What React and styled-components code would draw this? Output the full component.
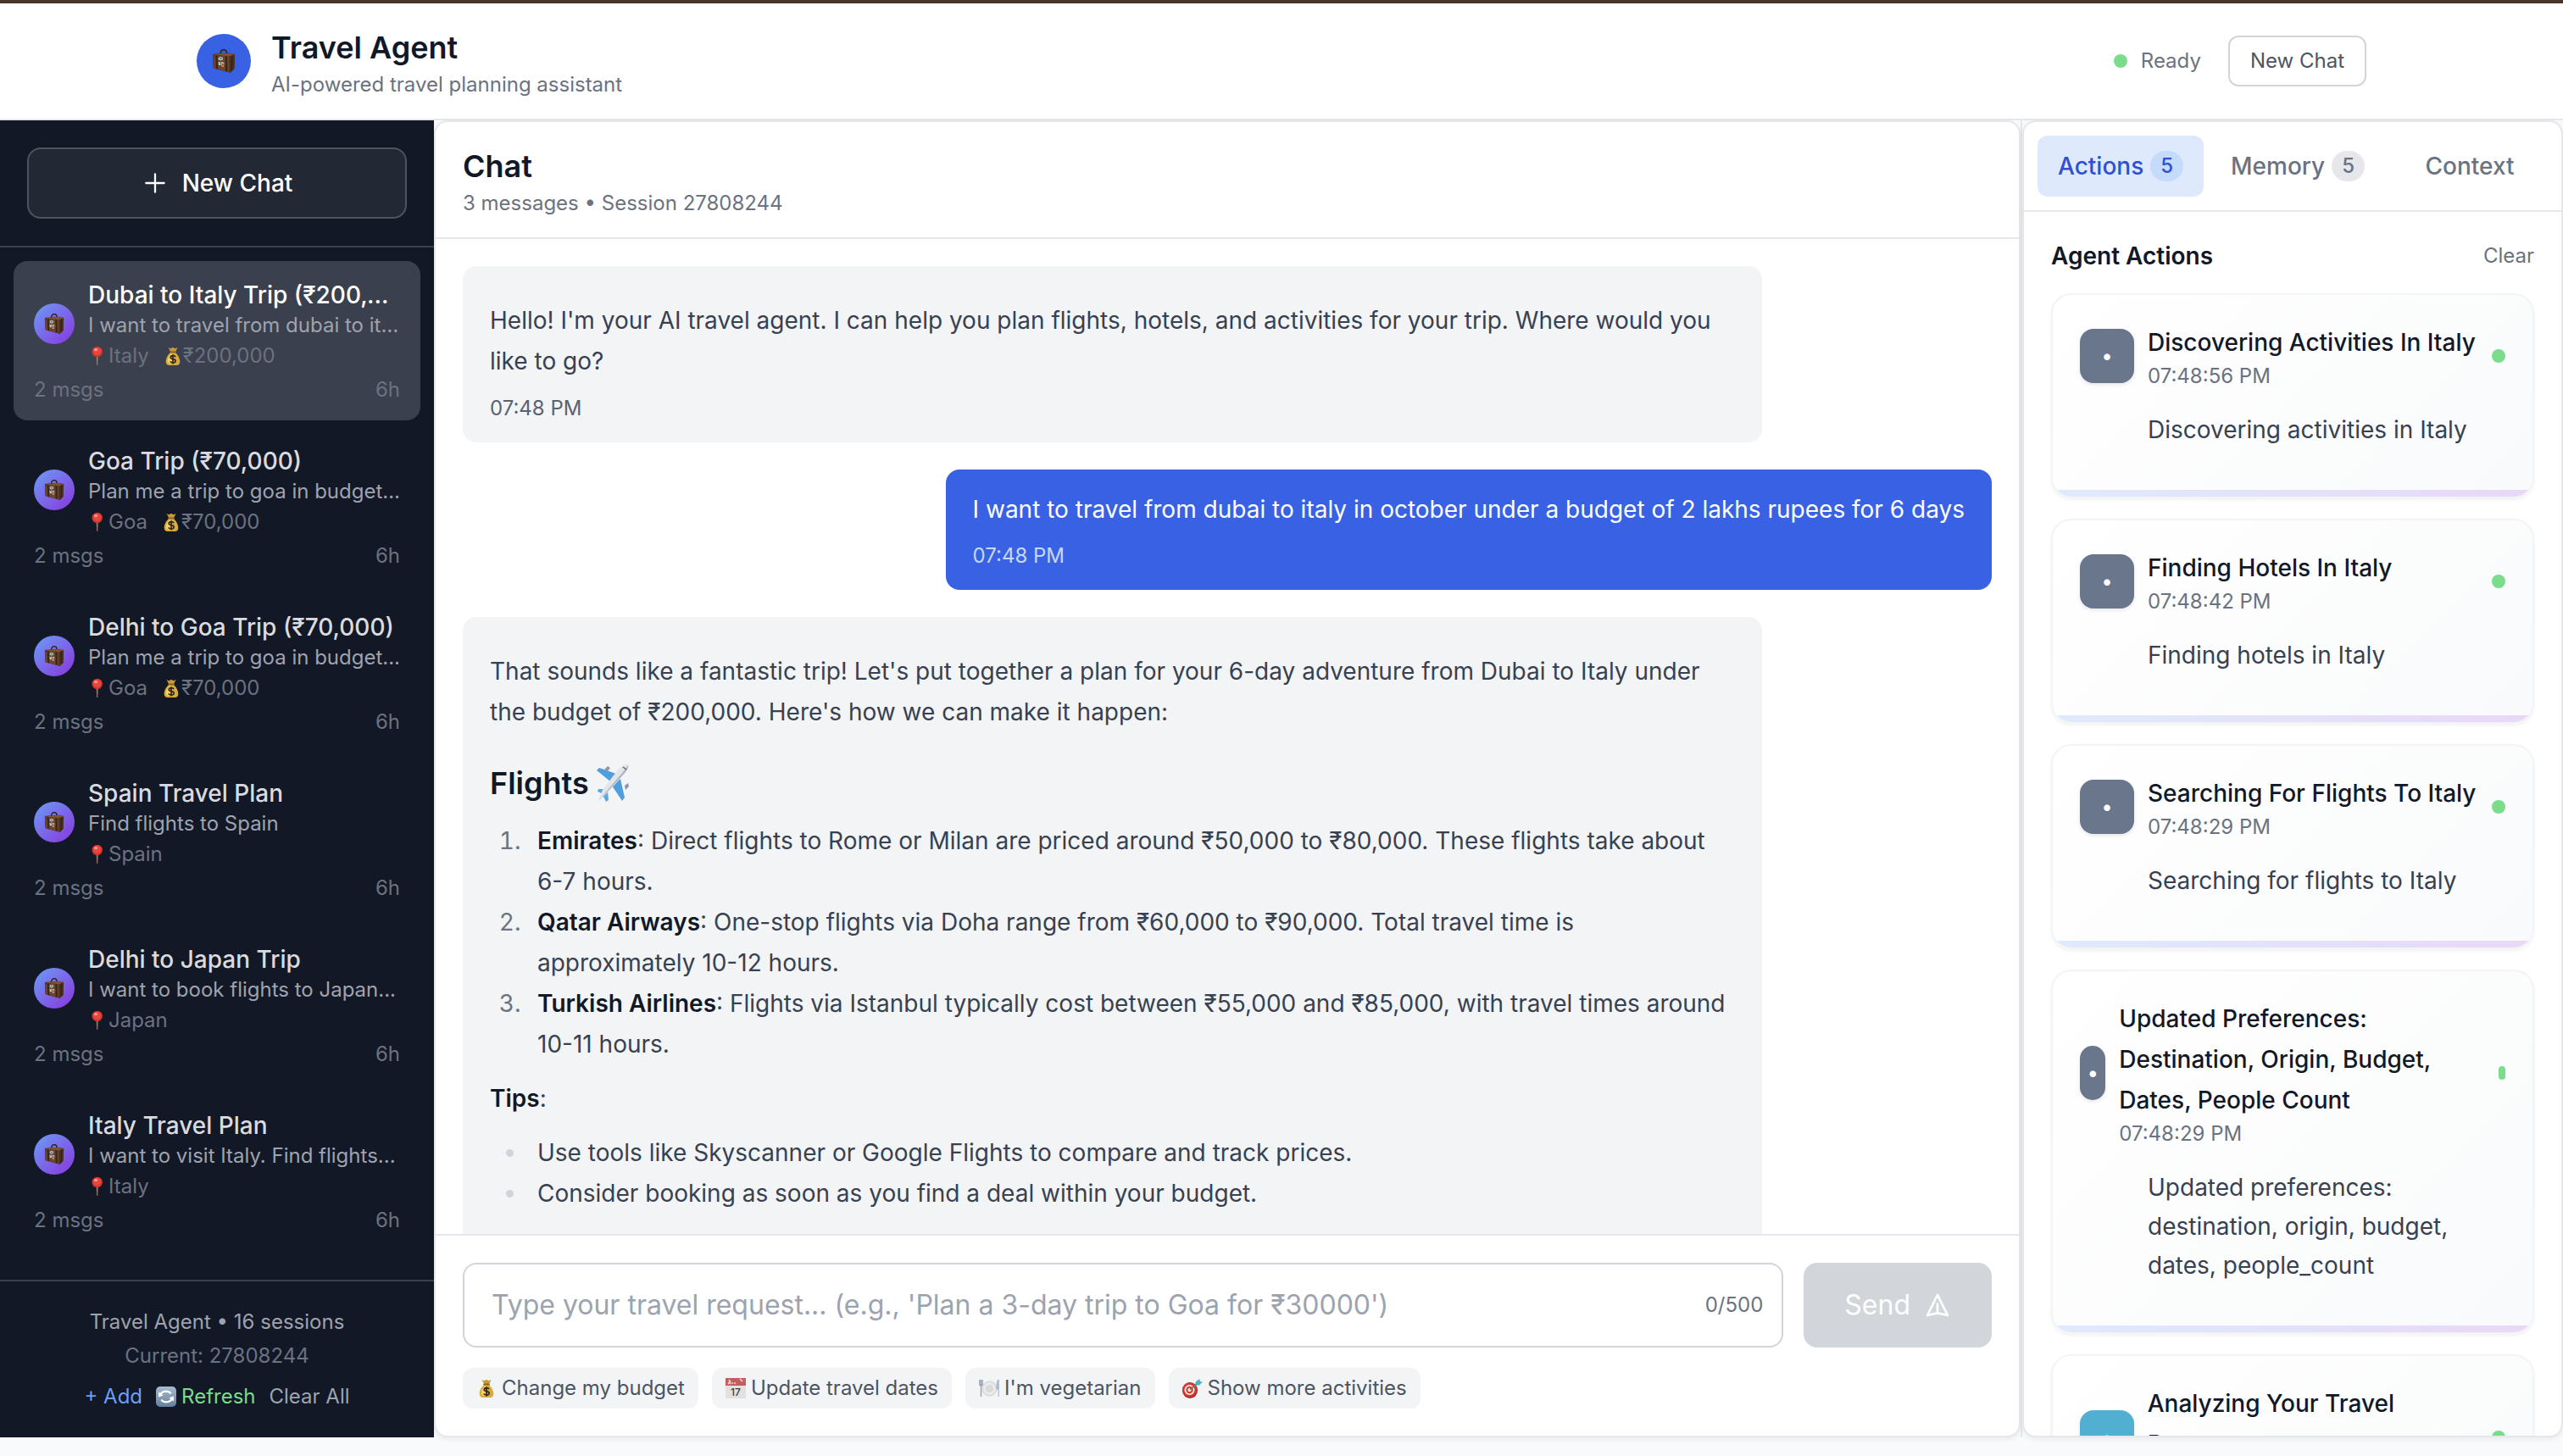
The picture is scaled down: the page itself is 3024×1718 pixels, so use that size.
import React, { useId, useState } from "react";
import styled, { createGlobalStyle } from "styled-components";

const c = {
  ink: "#111827",
  body: "#374151",
  slate: "#4b5563",
  muted: "#6b7280",
  faint: "#9ca3af",
  line: "#e5e7eb",
  edge: "#d1d5db",
  fill: "#f3f4f6",
  page: "#f9fafb",
  navy: "#121826",
  blue: "#3862e3",
  green: "#7bdc8b",
};

const GlobalStyle = createGlobalStyle`
  *, *::before, *::after { box-sizing: border-box; }
  body {
    margin: 0;
    background: ${c.page};
    color: ${c.ink};
    font-family: Inter, "Liberation Sans", sans-serif;
    font-size: 28px;
    line-height: 40px;
  }
  h1, h2, h3, p { margin: 0; font-size: inherit; font-weight: inherit; }
  button, input { font: inherit; color: inherit; }
  button { border: 0; padding: 0; background: none; cursor: pointer; }
  svg { display: block; flex: none; }
`;

/* ---------- pictograms ---------- */

function Suitcase({ size }) {
  return (
    <svg width={size} height={size} viewBox="0 0 84 84" aria-hidden="true">
      <path d="M30 20 Q30 3 41 2 Q53 2 53 17" fill="none" stroke="#2d2422" strokeWidth="5" />
      <path d="M3 21 Q3 17 8 17 L56 13 L78 17 Q81 18 81 22 L79 70 L66 83 Q63 84 60 82 L8 68 Q5 67 5 63 Z" fill="#4a2f22" />
      <path d="M4 22 L62 25 L62 82 L8 68 Q5 67 5 63 Z" fill="#6a442c" />
      <path d="M62 25 L81 20 L79 70 L65 83 L62 82 Z" fill="#49301f" />
      <path d="M5 20 L32 16 L58 14 L80 19 L62 25 Z" fill="#7d5638" />
      <path d="M13 22 L20 23 L21 71 L15 69 Z" fill="#3a251b" />
      <path d="M47 24 L54 25 L55 80 L48 78 Z" fill="#3a251b" />
      <path d="M70 23 L73 22 L72 75 L69 77 Z" fill="#2d1d14" />
      <ellipse cx="31" cy="34" rx="8" ry="6" fill="#cfd8d0" />
      <ellipse cx="31" cy="34" rx="5" ry="3" fill="#3f8390" />
      <path d="M22 46 L31 44 L32 56 L24 57 Z" fill="#8fb8a0" />
      <path d="M34 45 L43 47 L42 62 L34 61 Z" fill="#cfcbc6" />
      <path d="M36 50 L42 51 L41 60 L36 59 Z" fill="#b8473c" />
      <path d="M24 52 L28 51 L29 55 L25 56 Z" fill="#e1e1dc" />
    </svg>
  );
}

function Pin() {
  return (
    <svg width="24" height="24" viewBox="0 0 24 24" aria-hidden="true">
      <path d="M9.600 11 H11.800 L11.200 23 H10.200 Z" fill="#9b7b6c" />
      <circle cx="10.700" cy="7" r="6.200" fill="#d8322c" />
      <circle cx="10.700" cy="6.600" r="4.600" fill="#e8473d" />
      <ellipse cx="9" cy="4.600" rx="2.200" ry="1.700" fill="#f5988f" />
    </svg>
  );
}

function MoneyBag() {
  return (
    <svg width="24" height="24" viewBox="0 0 24 24" aria-hidden="true">
      <path d="M6.500 2 L9.200 3.200 L12 1.800 L14.600 3.200 L17.600 2 L15 7.200 H9.300 Z" fill="#c79a35" />
      <path d="M9 8 Q3.800 13 3.700 18.500 Q3.800 23 8 23 H16.200 Q20.300 23 20.300 18.500 Q20 13 15 8 Z" fill="#d9ab3d" />
      <path d="M9.600 9.500 Q6 13.500 5.800 18 Q6 20.500 8.400 21 H13 Q8 17 12 9.500 Z" fill="#f3d36b" />
      <rect x="8.200" y="6.400" width="7.800" height="2.200" rx="1.100" fill="#8d6520" />
      <path d="M15.200 13 Q14.200 11.600 12 11.600 Q9.200 11.800 9.200 13.700 Q9.300 15.200 12 15.600 Q15.200 16 15.200 18 Q15 20 12 20.100 Q9.600 20 8.800 18.400 M12 10.200 V21.500" fill="none" stroke="#33291a" strokeWidth="1.700" />
    </svg>
  );
}

function Plane() {
  return (
    <svg width="40" height="48" viewBox="0 0 40 48" aria-hidden="true">
      <path d="M24 13 L4 6 L1 9 L17 22 Z" fill="#4f9fdd" />
      <path d="M29 19 L34 41 L31 45 L19 27 Z" fill="#4f9fdd" />
      <path d="M12 31 L3 31 L2 34 L9 37 Z" fill="#5aa7e0" />
      <path d="M14 34 L15 44 L12 46 L8 38 Z" fill="#5aa7e0" />
      <path d="M10 8 l4 -4 3 2 -3 4 Z M34 27 l4 -3 1 4 -4 4 Z" fill="#8d96a3" />
      <path d="M38 2 Q40 5 35 12 L13 36 L2 46 L8 32 L27 7 Q34 1 38 2 Z" fill="#e3e5ea" />
      <path d="M38 3 Q39 6 34 12 L13 35 L4 44 L32 11 Z" fill="#aeb3bd" />
      <path d="M32 5 L36 8" stroke="#5b6470" strokeWidth="1.500" />
    </svg>
  );
}

function RefreshTile() {
  const id = useId();
  return (
    <svg width="24" height="24" viewBox="0 0 24 24" aria-hidden="true">
      <defs>
        <linearGradient id={id} x1="0" y1="0" x2="0" y2="1">
          <stop offset="0" stopColor="#a9bccf" />
          <stop offset="1" stopColor="#64809c" />
        </linearGradient>
      </defs>
      <rect width="24" height="24" rx="5" fill={`url(#${id})`} />
      <path d="M4.500 11 Q6 5.800 12 5.600 Q15.500 5.600 17.800 8.200 M19.500 13 Q18 18.200 12 18.400 Q8.500 18.400 6.200 15.800" fill="none" stroke="#fff" strokeWidth="2.400" />
      <path d="M3 6.500 V12.600 L8.600 10.600 Z M21 17.500 V11.400 L15.400 13.400 Z" fill="#fff" />
    </svg>
  );
}

function CalendarIcon() {
  return (
    <svg width="24" height="24" viewBox="0 0 24 24" aria-hidden="true">
      <rect y="1" width="24" height="23" fill="#e1e1e1" />
      <rect width="24" height="9" fill="#bf5f5e" />
      <path d="M4 2 l2 3 M17 1 l3 3 M3 7 l1.500 -2 1.500 2 M8 5 v2 M11 5 v2" stroke="#f2dede" strokeWidth="1.400" fill="none" />
      <text x="12" y="21" textAnchor="middle" fontFamily="Inter, sans-serif" fontSize="12" fontWeight="500" fill="#3a3a3a">17</text>
    </svg>
  );
}

function PlateIcon() {
  return (
    <svg width="24" height="24" viewBox="0 0 24 24" aria-hidden="true">
      <circle cx="12.500" cy="12.500" r="8.500" fill="#e6e6e6" stroke="#cfcfcf" />
      <circle cx="12.500" cy="12.500" r="5.500" fill="#dadada" stroke="#f8f8f8" />
      <path d="M0.800 2 V7 Q0.800 9 2.500 9 Q4.200 9 4.200 7 V2 M2.500 2 V22" fill="none" stroke="#8fa0b3" strokeWidth="1.300" />
      <path d="M23.200 2 V22 M23 2 Q20.800 4 21 13 H23" fill="#b5c4d4" stroke="#9db0c4" strokeWidth="1" />
    </svg>
  );
}

function DartIcon() {
  return (
    <svg width="24" height="24" viewBox="0 0 24 24" aria-hidden="true">
      <ellipse cx="9" cy="14.500" rx="9" ry="9.500" fill="#a92520" />
      <circle cx="8.500" cy="14" r="8.500" fill="#d33a31" />
      <circle cx="8.500" cy="14" r="6" fill="#f3e8e6" />
      <circle cx="8.500" cy="14" r="4.200" fill="#d33a31" />
      <circle cx="8.500" cy="14" r="2.200" fill="#f3e8e6" />
      <path d="M9 13.500 L18 6.500" stroke="#8a6a50" strokeWidth="1.600" />
      <path d="M15 8.500 L16 4 L20.500 1 L20.800 4 L24 4.500 L20 8.500 Z" fill="#4fb3bf" />
    </svg>
  );
}

function PlusIcon() {
  return (
    <svg width="32" height="32" viewBox="0 0 24 24" fill="none" stroke="currentColor" strokeWidth="1.700" strokeLinecap="round" aria-hidden="true">
      <path d="M12 4v16m8-8H4" />
    </svg>
  );
}

function SendIcon() {
  return (
    <svg width="32" height="32" viewBox="0 0 24 24" fill="none" stroke="currentColor" strokeWidth="2" strokeLinecap="round" strokeLinejoin="round" aria-hidden="true">
      <path d="M12 19l9 2-9-18-9 18 9-2zm0 0v-8" />
    </svg>
  );
}

/* ---------- frame ---------- */

const Page = styled.div`
  display: flex;
  flex-direction: column;
  height: 100vh;
  border-top: 4px solid #4a3329;
`;

const TopBar = styled.header`
  flex: none;
  background: #fff;
  border-bottom: 2px solid ${c.line};
`;

const TopBarInner = styled.div`
  display: flex;
  align-items: center;
  justify-content: space-between;
  max-width: 2560px;
  margin: 0 auto;
  padding: 24px 0;
`;

const Group = styled.div`
  display: flex;
  align-items: center;
  gap: ${(p) => p.$gap}px;
`;

const Logo = styled.div`
  display: grid;
  place-items: center;
  width: 64px;
  height: 64px;
  border-radius: 50%;
  background: ${c.blue};
`;

const Title = styled.h1`
  font-size: 36px;
  line-height: 56px;
  font-weight: 600;
`;

const Small = styled.p`
  font-size: 24px;
  line-height: 32px;
  color: ${(p) => p.$color || c.muted};
`;

const StatusDot = styled.span`
  width: 16px;
  height: 16px;
  border-radius: 8px;
  background: ${c.green};
`;

const OutlineButton = styled.button`
  padding: 12px 24px;
  border: 2px solid ${c.edge};
  border-radius: 12px;
  font-size: 24px;
  line-height: 32px;
  color: ${c.slate};
`;

const Workspace = styled.div`
  flex: 1;
  display: flex;
  min-height: 0;
  padding-bottom: 22px;
`;

const Panel = styled.section`
  flex: 1;
  display: flex;
  flex-direction: column;
  min-width: 0;
  min-height: 0;
  overflow: hidden;
  background: #fff;
  border: 2px solid ${c.line};
  border-radius: 16px;
  box-shadow: 0 2px 6px rgba(17, 24, 39, 0.08);
`;

/* ---------- session sidebar ---------- */

const Sidebar = styled.aside`
  flex: none;
  display: flex;
  flex-direction: column;
  width: 512px;
  background: ${c.navy};
  color: #fff;
`;

const SidebarTop = styled.div`
  padding: 32px;
  border-bottom: 2px solid #3a404e;
`;

const NewChatButton = styled.button`
  display: flex;
  align-items: center;
  justify-content: center;
  gap: 16px;
  width: 100%;
  padding: 20px;
  border: 2px solid #4d5461;
  border-radius: 16px;
  background: #222935;
  font-weight: 500;
`;

const SessionList = styled.nav`
  flex: 1;
  display: flex;
  flex-direction: column;
  gap: 8px;
  min-height: 0;
  padding: 16px;
  overflow: hidden;
`;

const Session = styled.button`
  flex: none;
  display: flex;
  flex-direction: column;
  gap: 8px;
  padding: 20px 24px;
  border-radius: 16px;
  text-align: left;
  background: ${(p) => (p.$active ? "#3a404e" : "transparent")};
  color: ${(p) => (p.$active ? "#fff" : "#d9dbdf")};
`;

const SessionMain = styled.span`
  display: flex;
  align-items: center;
  gap: 16px;
`;

const Avatar = styled.span`
  flex: none;
  display: grid;
  place-items: center;
  width: 48px;
  height: 48px;
  border-radius: 50%;
  background: linear-gradient(135deg, #6b9df5, #8a35dd);
`;

const SessionText = styled.span`
  flex: 1;
  min-width: 0;
`;

const Clip = styled.span`
  display: block;
  overflow: hidden;
  white-space: nowrap;
  text-overflow: ellipsis;
  font-size: ${(p) => (p.$title ? 28 : 24)}px;
  line-height: ${(p) => (p.$title ? 40 : 32)}px;
  font-weight: ${(p) => (p.$title ? 500 : 400)};
  color: ${(p) => (p.$title ? "inherit" : "#9ea3af")};
`;

const Meta = styled.span`
  display: flex;
  gap: 16px;
  margin-top: 4px;
  font-size: 24px;
  line-height: 32px;
  color: ${c.muted};
`;

const MetaItem = styled.span`
  display: flex;
  align-items: center;
`;

const SessionFoot = styled.span`
  display: flex;
  justify-content: space-between;
  font-size: 24px;
  line-height: 32px;
  color: ${c.muted};
`;

const SidebarFoot = styled.footer`
  display: flex;
  flex-direction: column;
  align-items: center;
  gap: 8px;
  padding: 32px;
  border-top: 2px solid #3a404e;
`;

const FootActions = styled.div`
  display: flex;
  gap: 16px;
  margin-top: 8px;
`;

const TextButton = styled.button`
  display: flex;
  align-items: center;
  gap: 6px;
  font-size: 24px;
  line-height: 32px;
  color: ${(p) => p.$color};
`;

/* ---------- conversation ---------- */

const PanelHead = styled.header`
  padding: 24px 32px;
  border-bottom: 2px solid ${c.line};
`;

const Messages = styled.div`
  flex: 1;
  display: flex;
  flex-direction: column;
  align-items: flex-start;
  gap: 32px;
  min-height: 0;
  padding: 32px;
  overflow: hidden;
`;

const Bubble = styled.article`
  flex: none;
  max-width: 85%;
  padding: 24px 32px;
  border-radius: 16px;
  background: ${c.fill};
  color: ${c.body};
`;

const UserBubble = styled(Bubble)`
  align-self: flex-end;
  background: ${c.blue};
  color: #fff;
  line-height: 46px;
`;

const Time = styled.time`
  display: block;
  margin-top: 16px;
  font-size: 24px;
  line-height: 32px;
  color: ${(p) => (p.$onBlue ? "#c6d8fb" : "#5b6270")};
`;

const Prose = styled.div`
  line-height: 48px;

  p { margin: 16px 0; }
  p:last-child { margin-bottom: 0; }
  strong { font-weight: 600; color: ${c.ink}; }
  ol, ul { margin: 16px 0; padding-left: 44px; }
  li { padding-left: 12px; }
  ol li::marker { color: ${c.muted}; }
  ul li::marker { color: ${c.edge}; }
`;

const ProseHeading = styled.h3`
  display: flex;
  align-items: center;
  gap: 8px;
  margin: 32px 0 16px;
  font-size: 36px;
  line-height: 56px;
  font-weight: 600;
  color: ${c.ink};
`;

const Composer = styled.form`
  display: flex;
  flex-direction: column;
  gap: 24px;
  padding: 32px;
  border-top: 2px solid ${c.line};
`;

const ComposerRow = styled.div`
  display: flex;
  gap: 24px;
`;

const Field = styled.label`
  flex: 1;
  display: flex;
  align-items: center;
  gap: 24px;
  height: 100px;
  padding: 0 22px 0 32px;
  border: 2px solid ${c.edge};
  border-radius: 16px;
  font-size: 24px;
  line-height: 32px;
  color: ${c.muted};
`;

const FieldInput = styled.input`
  flex: 1;
  min-width: 0;
  padding: 0;
  border: 0;
  outline: 0;
  background: none;
  font-size: 32px;
  line-height: 48px;
  color: ${c.ink};

  &::placeholder { color: ${c.faint}; opacity: 1; }
`;

const SendButton = styled.button`
  display: flex;
  align-items: center;
  gap: 16px;
  padding: 0 48px;
  border-radius: 16px;
  background: #d2d5da;
  color: #fff;
  font-size: 32px;
  line-height: 48px;
`;

const Chips = styled.div`
  display: flex;
  flex-wrap: wrap;
  gap: 16px;
`;

const Chip = styled.button`
  display: flex;
  align-items: center;
  gap: 6px;
  padding: 8px 16px;
  border-radius: 12px;
  background: ${c.fill};
  font-size: 24px;
  line-height: 32px;
  color: ${c.slate};
`;

/* ---------- agent activity ---------- */

const ActivityColumn = styled.aside`
  flex: none;
  display: flex;
  width: 640px;
  border-left: 2px solid ${c.line};
`;

const Tabs = styled.div`
  display: flex;
  gap: 8px;
  padding: 16px;
  border-bottom: 2px solid ${c.line};
`;

const Tab = styled.button`
  flex: 1;
  display: flex;
  align-items: center;
  justify-content: center;
  gap: 8px;
  padding: 16px 24px;
  border-radius: 12px;
  font-weight: 500;
  background: ${(p) => (p.$active ? "#dee9fc" : "transparent")};
  color: ${(p) => (p.$active ? "#2f50d3" : c.muted)};
`;

const Badge = styled.span`
  padding: 2px 12px;
  border-radius: 18px;
  background: ${(p) => (p.$active ? "#c5dbfb" : c.line)};
  font-size: 24px;
  line-height: 32px;
`;

const ActivityBody = styled.div`
  flex: 1;
  display: flex;
  flex-direction: column;
  gap: 24px;
  min-height: 0;
  padding: 32px;
  overflow: hidden;
`;

const ActivityHead = styled.div`
  display: flex;
  align-items: center;
  justify-content: space-between;
`;

const ActivityTitle = styled.h2`
  font-weight: 600;
`;

const Card = styled.article`
  flex: none;
  position: relative;
  padding: 32px 32px 56px;
  overflow: hidden;
  border: 2px solid ${c.fill};
  border-radius: 24px;
  background: linear-gradient(135deg, #fff, ${c.page});
  box-shadow: 0 2px 4px rgba(17, 24, 39, 0.06);

  &::after {
    content: "";
    position: absolute;
    inset: auto 0 0;
    height: 8px;
    background: linear-gradient(90deg, #dfeafd, #e8d8f8);
  }
`;

const CardHead = styled.div`
  display: flex;
  align-items: center;
  justify-content: space-between;
`;

const CardIcon = styled.span`
  display: grid;
  place-items: center;
  width: 64px;
  height: 64px;
  border-radius: 16px;
  background: ${(p) => p.$tone};
  box-shadow: 0 2px 4px rgba(17, 24, 39, 0.1);
  color: #fff;
  font-size: 24px;
  line-height: 32px;
`;

const CardTitle = styled.h3`
  line-height: 48px;
  font-weight: 500;
`;

const CardText = styled.p`
  margin: 24px 0 0 80px;
  line-height: 46px;
  color: ${c.body};
`;

/* ---------- content ---------- */

const sessions = [
  { title: "Dubai to Italy Trip (₹200,000)", text: "I want to travel from dubai to italy in october", place: "Italy", budget: "₹200,000" },
  { title: "Goa Trip (₹70,000)", text: "Plan me a trip to goa in budget...", place: "Goa", budget: "₹70,000" },
  { title: "Delhi to Goa Trip (₹70,000)", text: "Plan me a trip to goa in budget...", place: "Goa", budget: "₹70,000" },
  { title: "Spain Travel Plan", text: "Find flights to Spain", place: "Spain" },
  { title: "Delhi to Japan Trip", text: "I want to book flights to Japan...", place: "Japan" },
  { title: "Italy Travel Plan", text: "I want to visit Italy. Find flights...", place: "Italy" },
];

const actions = [
  { title: "Discovering Activities In Italy", time: "07:48:56 PM", text: "Discovering activities in Italy" },
  { title: "Finding Hotels In Italy", time: "07:48:42 PM", text: "Finding hotels in Italy" },
  { title: "Searching For Flights To Italy", time: "07:48:29 PM", text: "Searching for flights to Italy" },
  {
    title: "Updated Preferences: Destination, Origin, Budget, Dates, People Count",
    time: "07:48:29 PM",
    text: "Updated preferences: destination, origin, budget, dates, people_count",
  },
  { title: "Analyzing Your Travel Request", time: "07:48:25 PM", text: "Analyzing your travel request", tone: "#51b0d1" },
];

const suggestions = [
  { icon: <MoneyBag />, text: "Change my budget" },
  { icon: <CalendarIcon />, text: "Update travel dates" },
  { icon: <PlateIcon />, text: "I'm vegetarian" },
  { icon: <DartIcon />, text: "Show more activities" },
];

const tabs = [{ name: "Actions", count: 5 }, { name: "Memory", count: 5 }, { name: "Context" }];

function SessionItem({ session, active, onSelect }) {
  return (
    <Session type="button" $active={active} onClick={onSelect}>
      <SessionMain>
        <Avatar><Suitcase size={24} /></Avatar>
        <SessionText>
          <Clip $title>{session.title}</Clip>
          <Clip>{session.text}</Clip>
          <Meta>
            <MetaItem><Pin />{session.place}</MetaItem>
            {session.budget && <MetaItem><MoneyBag />{session.budget}</MetaItem>}
          </Meta>
        </SessionText>
      </SessionMain>
      <SessionFoot><span>2 msgs</span><span>6h</span></SessionFoot>
    </Session>
  );
}

function ActionCard({ action }) {
  return (
    <Card>
      <CardHead>
        <Group $gap={16}>
          <CardIcon $tone={action.tone || "#6a768c"}>•</CardIcon>
          <div>
            <CardTitle>{action.title}</CardTitle>
            <Small>{action.time}</Small>
          </div>
        </Group>
        <StatusDot />
      </CardHead>
      <CardText>{action.text}</CardText>
    </Card>
  );
}

export default function App() {
  const [current, setCurrent] = useState(0);
  const [tab, setTab] = useState("Actions");
  const [draft, setDraft] = useState("");

  return (
    <>
      <GlobalStyle />
      <Page>
        <TopBar>
          <TopBarInner>
            <Group $gap={24}>
              <Logo><Suitcase size={28} /></Logo>
              <div>
                <Title>Travel Agent</Title>
                <Small>AI-powered travel planning assistant</Small>
              </div>
            </Group>
            <Group $gap={32}>
              <Group $gap={16}>
                <StatusDot />
                <Small>Ready</Small>
              </Group>
              <OutlineButton type="button">New Chat</OutlineButton>
            </Group>
          </TopBarInner>
        </TopBar>

        <Workspace>
          <Sidebar>
            <SidebarTop>
              <NewChatButton type="button"><PlusIcon />New Chat</NewChatButton>
            </SidebarTop>
            <SessionList>
              {sessions.map((s, i) => (
                <SessionItem key={s.title} session={s} active={i === current} onSelect={() => setCurrent(i)} />
              ))}
            </SessionList>
            <SidebarFoot>
              <Small $color="#9ea3af">Travel Agent • 16 sessions</Small>
              <Small>Current: 27808244</Small>
              <FootActions>
                <TextButton type="button" $color="#6b9ef6">+ Add</TextButton>
                <TextButton type="button" $color={c.green}><RefreshTile />Refresh</TextButton>
                <TextButton type="button" $color="#9ea3af">Clear All</TextButton>
              </FootActions>
            </SidebarFoot>
          </Sidebar>

          <Panel as="main">
            <PanelHead>
              <Title as="h2">Chat</Title>
              <Small>3 messages • Session 27808244</Small>
            </PanelHead>

            <Messages>
              <Bubble>
                <Prose>
                  <p>
                    Hello! I'm your AI travel agent. I can help you plan flights, hotels, and activities for your trip.
                    Where would you like to go?
                  </p>
                </Prose>
                <Time>07:48 PM</Time>
              </Bubble>

              <UserBubble>
                <p>I want to travel from dubai to italy in october under a budget of 2 lakhs rupees for 6 days</p>
                <Time $onBlue>07:48 PM</Time>
              </UserBubble>

              <Bubble>
                <Prose>
                  <p>
                    That sounds like a fantastic trip! Let's put together a plan for your 6-day adventure from Dubai to
                    Italy under the budget of ₹200,000. Here's how we can make it happen:
                  </p>
                  <ProseHeading>Flights <Plane /></ProseHeading>
                  <ol>
                    <li>
                      <strong>Emirates</strong>: Direct flights to Rome or Milan are priced around ₹50,000 to ₹80,000.
                      These flights take about 6-7 hours.
                    </li>
                    <li>
                      <strong>Qatar Airways</strong>: One-stop flights via Doha range from ₹60,000 to ₹90,000. Total
                      travel time is approximately 10-12 hours.
                    </li>
                    <li>
                      <strong>Turkish Airlines</strong>: Flights via Istanbul typically cost between ₹55,000 and
                      ₹85,000, with travel times around 10-11 hours.
                    </li>
                  </ol>
                  <p><strong>Tips</strong>:</p>
                  <ul>
                    <li>Use tools like Skyscanner or Google Flights to compare and track prices.</li>
                    <li>Consider booking as soon as you find a deal within your budget.</li>
                  </ul>
                  <ProseHeading>Hotels</ProseHeading>
                </Prose>
                <Time>07:48 PM</Time>
              </Bubble>
            </Messages>

            <Composer onSubmit={(e) => e.preventDefault()}>
              <ComposerRow>
                <Field>
                  <FieldInput
                    type="text"
                    aria-label="Travel request"
                    maxLength={500}
                    value={draft}
                    onChange={(e) => setDraft(e.target.value)}
                    placeholder="Type your travel request... (e.g., 'Plan a 3-day trip to Goa for ₹30000')"
                  />
                  <span>{draft.length}/500</span>
                </Field>
                <SendButton type="submit">Send<SendIcon /></SendButton>
              </ComposerRow>
              <Chips>
                {suggestions.map((s) => (
                  <Chip key={s.text} type="button" onClick={() => setDraft(s.text)}>{s.icon}{s.text}</Chip>
                ))}
              </Chips>
            </Composer>
          </Panel>

          <ActivityColumn>
            <Panel>
              <Tabs>
                {tabs.map((t) => (
                  <Tab key={t.name} type="button" $active={t.name === tab} onClick={() => setTab(t.name)}>
                    {t.name}
                    {t.count && <Badge $active={t.name === tab}>{t.count}</Badge>}
                  </Tab>
                ))}
              </Tabs>
              <ActivityBody>
                <ActivityHead>
                  <ActivityTitle>Agent Actions</ActivityTitle>
                  <TextButton type="button" $color={c.muted}>Clear</TextButton>
                </ActivityHead>
                {actions.map((a) => <ActionCard key={a.title} action={a} />)}
              </ActivityBody>
            </Panel>
          </ActivityColumn>
        </Workspace>
      </Page>
    </>
  );
}
